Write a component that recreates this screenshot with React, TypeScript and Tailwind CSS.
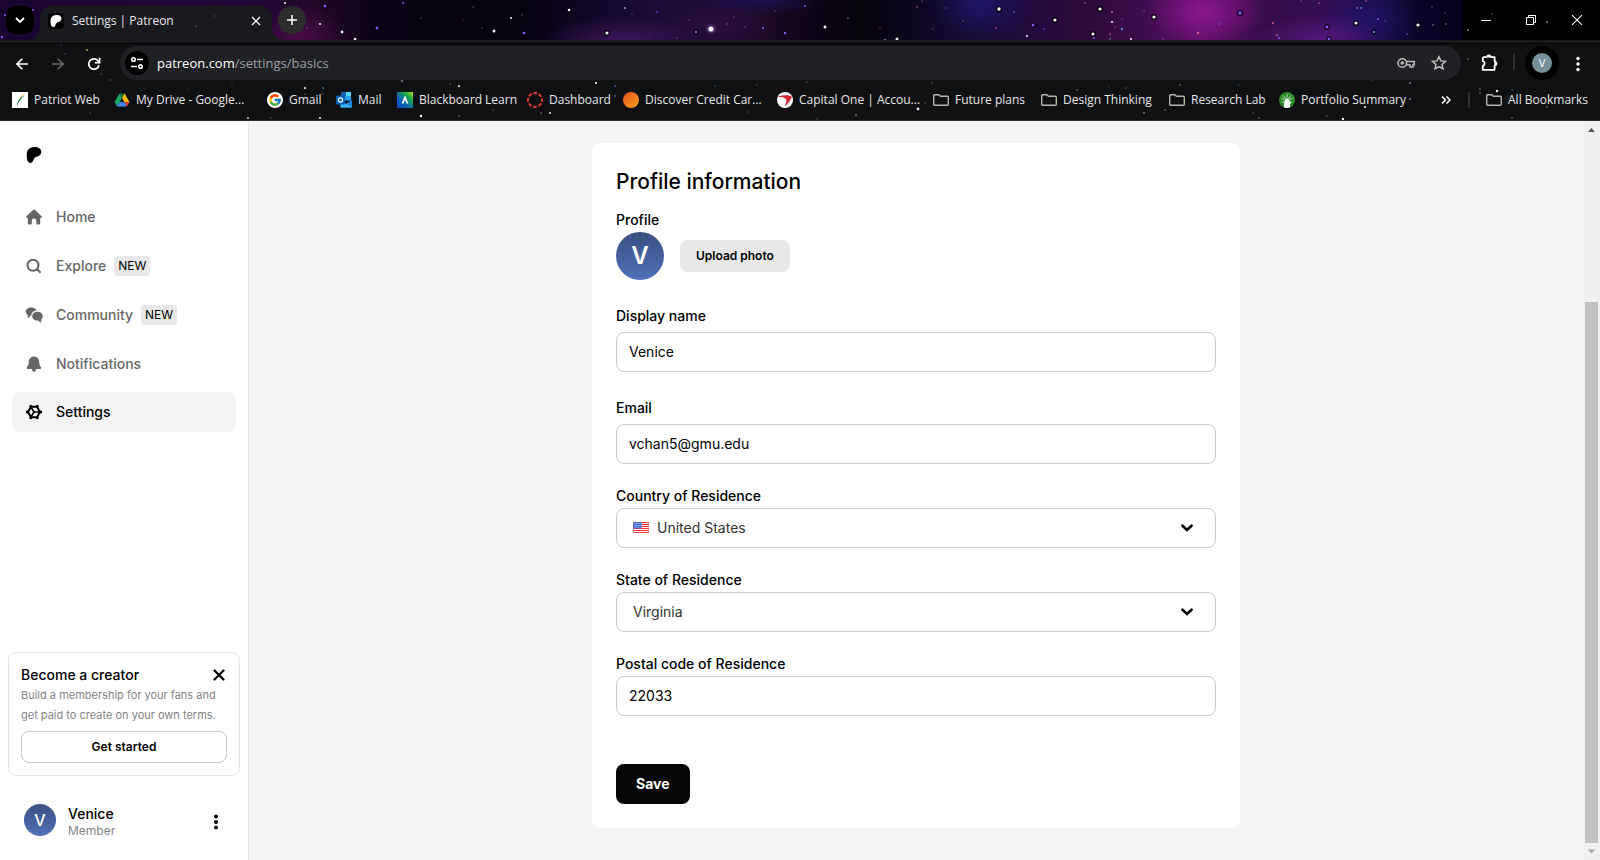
import React from "react";
import { FcGoogle } from "react-icons/fc";

const WHITE = "#ffffff";
const PURPLE = "#8f5cff";
const PINK = "#d9608f";
const BLUE = "#5a86d8";
const GREY = "#8a8799";

type Star = [number, number, number, string];

const SKY_STARS: Star[] = [
  [285, 3, 1, WHITE], [325, 6, 1.5, PURPLE], [320, 24, 1, WHITE], [342, 32, 1.4, WHITE], [355, 39, 1.3, WHITE],
  [377, 28, 1.4, PURPLE], [307, 28, 0.8, PINK], [5, 15, 1, PURPLE], [2, 37, 1.2, PURPLE], [33, 10, 1, PURPLE],
  [403, 3, 1, PURPLE], [473, 7, 0.8, GREY], [421, 18, 0.8, GREY], [511, 18, 1, WHITE], [494, 31, 1.5, WHITE],
  [522, 15, 0.8, GREY], [482, 28, 0.7, GREY], [463, 20, 0.6, PINK], [524, 33, 1.3, PURPLE], [607, 33, 1.6, WHITE],
  [569, 10, 1.3, WHITE], [625, 8, 0.9, WHITE], [657, 12, 0.9, PURPLE], [632, 14, 0.7, PURPLE], [711, 29, 2.6, WHITE],
  [785, 33, 1.2, PURPLE], [763, 28, 1, PURPLE], [689, 20, 0.7, GREY], [696, 32, 1.3, PURPLE], [677, 38, 0.7, GREY],
  [727, 24, 0.8, PINK], [734, 17, 0.7, PINK], [745, 27, 0.8, BLUE], [775, 11, 0.7, GREY], [650, 32, 0.6, GREY],
  [805, 6, 1, PURPLE], [825, 27, 1.5, WHITE], [848, 18, 0.9, GREY], [897, 39, 1.5, WHITE], [880, 28, 0.7, PINK],
  [917, 7, 0.9, PINK], [922, 1, 0.8, GREY], [933, 29, 0.7, GREY], [946, 8, 0.8, GREY], [963, 21, 0.8, GREY],
  [996, 28, 0.9, PINK], [999, 9, 1.7, WHITE], [1033, 25, 1.5, PURPLE], [1055, 20, 1.6, WHITE], [1027, 36, 1, WHITE],
  [1014, 12, 0.9, PURPLE], [1044, 29, 0.9, PURPLE], [1100, 9, 1.6, WHITE], [1112, 12, 1, PINK], [1112, 22, 1, WHITE],
  [1115, 27, 0.8, GREY], [1093, 34, 1.6, WHITE], [1094, 38, 1, PURPLE], [1122, 29, 1.2, BLUE], [1131, 39, 1, WHITE],
  [1122, 19, 0.8, PURPLE], [1110, 34, 0.9, PINK], [1110, 39, 0.9, GREY], [1144, 11, 0.8, PINK], [1154, 17, 1.6, WHITE],
  [1198, 33, 1.2, PINK], [1085, 3, 0.9, GREY], [1163, 39, 0.8, PURPLE], [1240, 13, 1.7, PURPLE], [1219, 24, 0.9, PURPLE],
  [1273, 23, 1, PINK], [1277, 35, 1, PINK], [1279, 38, 1, PURPLE], [1327, 27, 1.5, PURPLE], [1356, 23, 1.5, WHITE],
  [1374, 32, 1.3, BLUE], [1357, 8, 1, BLUE], [1361, 8, 1, BLUE], [1319, 3, 0.9, PINK], [1366, 1, 0.9, PINK],
  [1329, 39, 1.3, PURPLE], [1385, 21, 0.8, PURPLE], [1378, 19, 1, PURPLE], [1418, 25, 1.6, WHITE], [1407, 34, 0.9, BLUE],
  [1433, 25, 0.9, GREY], [1446, 24, 0.9, PINK], [1445, 13, 0.7, GREY], [1432, 7, 0.8, BLUE], [1301, 1, 0.8, GREY],
];

const TOOLBAR_STARS: Star[] = [
  [198, 42, 1.1, WHITE], [196, 26, 0.8, GREY], [215, 16, 0.7, GREY], [87, 50, 1.1, "#b3a06a"], [65, 54, 0.8, "#6b6fa8"],
  [101, 74, 0.8, GREY], [112, 80, 0.8, "#55555f"], [61, 45, 0.8, "#55555f"], [110, 80, 0.7, GREY], [140, 88, 0.7, "#55555f"],
  [188, 90, 0.8, "#55555f"], [305, 88, 1.1, WHITE], [323, 88, 1, "#44629b"], [305, 94, 0.8, GREY], [323, 94, 0.9, "#44629b"],
  [248, 118, 1.1, "#c8c08a"], [271, 118, 0.8, GREY], [320, 118, 1, WHITE], [232, 86, 0.8, "#55555f"], [90, 113, 0.7, GREY],
  [402, 81, 1, GREY], [450, 84, 0.8, GREY], [459, 86, 1, WHITE], [596, 83, 1.1, WHITE], [615, 86, 1, "#44629b"],
  [615, 96, 1, "#44629b"], [421, 116, 1.2, WHITE], [459, 116, 0.9, GREY], [493, 110, 0.8, GREY], [541, 113, 0.9, GREY],
  [550, 113, 1, WHITE], [715, 86, 0.8, "#44629b"], [748, 112, 0.7, GREY], [757, 85, 0.7, GREY], [807, 82, 0.8, GREY],
  [918, 109, 1.4, WHITE], [925, 103, 0.8, GREY], [856, 115, 1, "#8a7f50"], [817, 119, 0.8, GREY], [932, 83, 0.8, GREY],
  [1077, 90, 0.9, GREY], [1109, 87, 0.8, "#8a3535"], [1126, 88, 0.8, GREY], [1144, 113, 1, "#8a7f50"], [1165, 110, 0.9, GREY],
  [1180, 85, 0.9, GREY], [1410, 83, 1, GREY], [1410, 99, 1, GREY], [1497, 91, 1.2, WHITE], [1480, 89, 0.9, GREY],
  [1480, 93, 0.9, GREY], [1343, 119, 1.2, WHITE], [1365, 107, 1.1, WHITE], [1327, 116, 0.8, GREY], [1253, 113, 0.8, GREY],
  [1259, 118, 0.9, GREY], [1239, 85, 0.8, "#44629b"], [1372, 80, 0.8, GREY], [1468, 59, 0.9, GREY], [1453, 41, 0.8, WHITE],
  [1538, 42, 1.1, WHITE], [1329, 42, 0.8, GREY], [1512, 118, 0.9, GREY], [1512, 90, 0.8, GREY], [1547, 107, 0.9, GREY],
  [1547, 22, 1, GREY], [1468, 30, 1, GREY], [1492, 14, 0.8, GREY], [865, 42, 0.8, "#8a7f50"], [885, 40, 0.9, WHITE],
  [464, 42, 0.8, GREY], [1117, 41, 0.8, GREY],
];

function Stars({ stars }: { stars: Star[] }) {
  return (
    <svg className="pointer-events-none absolute left-0 top-0" width="1600" height="120" aria-hidden="true">
      {stars.map(([x, y, r, fill], i) => (
        <g key={i}>
          {r >= 1.3 && r < 2 && <circle cx={x} cy={y} r={r + 1.5} fill="#0a0212" opacity="0.75" />}
          {r > 2 && <circle cx={x} cy={y} r="5" fill="#8a5aa8" opacity="0.3" />}
          <circle cx={x} cy={y} r={r} fill={fill} opacity={r < 1 ? 0.65 : 0.95} />
        </g>
      ))}
    </svg>
  );
}

function PatreonMark({ className }: { className?: string }) {
  return (
    <svg viewBox="0 0 24 24" fill="currentColor" className={className} aria-hidden="true">
      <path d="M22.957 7.21c-.004-3.064-2.391-5.576-5.191-6.482-3.478-1.125-8.064-.962-11.384.604C2.357 3.231 1.093 7.391 1.046 11.54c-.039 3.411.302 12.396 5.369 12.46 3.765.047 4.326-4.804 6.068-7.141 1.24-1.662 2.836-2.132 4.801-2.618 3.376-.836 5.678-3.501 5.673-7.031Z" />
    </svg>
  );
}

function FolderIcon() {
  return (
    <svg viewBox="0 0 16 16" className="size-4 shrink-0" fill="none" stroke="#b4b4b4" strokeWidth="1.4" aria-hidden="true">
      <path d="M1.7 2.7h4.1l1.6 1.6h6.9c.6 0 1 .4 1 1v7c0 .6-.4 1-1 1H1.700c-.6 0-1-.4-1-1v-8.600c0-.6.4-1 1-1z" />
    </svg>
  );
}

const patriotIcon = (
  <svg viewBox="0 0 16 16" className="size-4 shrink-0" aria-hidden="true">
    <path d="M0 0h16v16H0z" fill="#fff" />
    <path d="M5 14.500C5 9 8 5 12.500 3.500 9 6.500 6.500 9.500 5 14.500z" fill="#1d6b42" />
    <path d="M6.500 7C8.500 4 11 2.500 13.500 2 11 3.500 9 5 6.500 7z" fill="#f2b632" />
  </svg>
);

const driveIcon = (
  <svg viewBox="0 0 16 16" className="size-4 shrink-0" aria-hidden="true">
    <path d="M5.400 1.500 8 6 3.200 14.500 .5 10z" fill="#1ea362" />
    <path d="M5.400 1.500h5.200L8 6z" fill="#11753f" />
    <path d="M10.600 1.500 15.500 10h-5.200L8 6z" fill="#fbbc04" />
    <path d="M15.500 10 12.800 14.500 10.300 10z" fill="#ea4335" />
    <path d="M5.700 10h4.600l2.500 4.500H3.200z" fill="#4285f4" />
  </svg>
);

const googleIcon = (
  <span className="flex size-4 shrink-0 items-center justify-center rounded-full bg-white">
    <FcGoogle className="size-3.5" aria-hidden="true" />
  </span>
);

const outlookIcon = (
  <svg viewBox="0 0 16 16" className="size-4 shrink-0" aria-hidden="true">
    <path d="M5 0h10v9H5z" fill="#0f64b5" />
    <path d="M10 0h5v4h-5z" fill="#50d9ff" />
    <path d="M5 4h5v4H5z" fill="#1490df" />
    <path d="M10 4h5v4h-5z" fill="#28a8ea" />
    <path d="M4 15.500 16 8v7a.5.5 0 0 1-.5.500z" fill="#1a86dc" />
    <path d="M4 8l12 7.500H4.500z" fill="#35b8f1" />
    <rect y="3.500" width="9" height="9" rx=".8" fill="#0a5fb4" />
    <circle cx="4.500" cy="8" r="2.100" fill="none" stroke="#fff" strokeWidth="1.300" />
  </svg>
);

const blackboardIcon = (
  <svg viewBox="0 0 16 16" className="size-4 shrink-0" aria-hidden="true">
    <defs>
      <linearGradient id="bb" x1="1" y1="0" x2="0" y2="1">
        <stop offset="0" stopColor="#b5dc12" />
        <stop offset="0.300" stopColor="#12a648" />
        <stop offset="0.600" stopColor="#0a68b4" />
        <stop offset="1" stopColor="#0b44c4" />
      </linearGradient>
    </defs>
    <path d="M0 0h16v16H0z" fill="url(#bb)" />
    <path d="M5.500 11.500 8 5.500l2.500 6" fill="none" stroke="#fff" strokeWidth="1.800" />
  </svg>
);

const canvasIcon = (
  <svg viewBox="0 0 16 16" className="size-4 shrink-0" fill="none" aria-hidden="true">
    <circle cx="8" cy="8" r="7" stroke="#e23b2e" strokeWidth="2" strokeDasharray="3.700 1.798" strokeDashoffset="1.850" />
  </svg>
);

const discoverIcon = (
  <span className="size-4 shrink-0 rounded-full bg-linear-to-br from-[#e4501b] to-[#fb9f1d]" />
);

const capitalIcon = (
  <svg viewBox="0 0 16 16" className="size-4 shrink-0" aria-hidden="true">
    <circle cx="8" cy="8" r="8" fill="#fff" />
    <path d="M.8 4.800C5 3 10.500 2.600 15 4.800c-1 3.200-4 7.200-7.200 9.400 1.200-3.400 2-5.200 1.200-6.800C7.800 5.400 4.500 4.800.8 4.800z" fill="#d22630" />
  </svg>
);

const portfolioIcon = (
  <svg viewBox="0 0 16 16" className="size-4 shrink-0" aria-hidden="true">
    <circle cx="8" cy="8" r="8" fill="#2f8a2b" />
    <path d="M8 8V2M8 8 4 3.500M8 8l4-4.500M8 8 2.500 6.500M8 8l5.500-1.500M8 8l-5 2.500M8 8l5 2.500" stroke="#cfe8c8" strokeWidth=".8" />
    <path d="M4.800 15.300c.2-4 .4-7.300 3.600-8.500 1.600 1 3.400 3 3.200 4.800l-1 .4c.6 1.200.7 2.300.5 3.300-2 .9-4.300.9-6.300 0z" fill="#fff" />
  </svg>
);

const BOOKMARKS: { label: string; icon: React.ReactNode; width: string }[] = [
  { label: "Patriot Web", icon: patriotIcon, width: "w-[102px]" },
  { label: "My Drive - Google...", icon: driveIcon, width: "w-[153px]" },
  { label: "Gmail", icon: googleIcon, width: "w-[69px]" },
  { label: "Mail", icon: outlookIcon, width: "w-[61px]" },
  { label: "Blackboard Learn", icon: blackboardIcon, width: "w-[130px]" },
  { label: "Dashboard", icon: canvasIcon, width: "w-24" },
  { label: "Discover Credit Car...", icon: discoverIcon, width: "w-[154px]" },
  { label: "Capital One | Accou...", icon: capitalIcon, width: "w-[156px]" },
  { label: "Future plans", icon: <FolderIcon />, width: "w-[108px]" },
  { label: "Design Thinking", icon: <FolderIcon />, width: "w-32" },
  { label: "Research Lab", icon: <FolderIcon />, width: "w-[110px]" },
  { label: "Portfolio Summary", icon: portfolioIcon, width: "w-[140px]" },
];

function TabStrip() {
  return (
    <div className="relative flex h-10 items-end overflow-hidden bg-[#07020f]">
      <div className="absolute inset-0 bg-[linear-gradient(90deg,#1a0530_0px,#220635_250px,#220828_310px,#0d0318_370px,#06020f_420px,#06020f_520px,#120728_600px,#1c0b38_660px,#1a0a34_720px,#1a0822_770px,#0c0414_820px,#05020a_860px,#0e0722_920px,#180c3a_980px,#220a3e_1030px,#2c0a3a_1090px,#400d50_1150px,#64126c_1200px,#330c46_1270px,#330f56_1330px,#1c0d48_1370px,#0a0528_1420px,#04021a_1460px,#000_1480px)]" />
      <div className="absolute inset-0 bg-[radial-gradient(50px_30px_at_300px_36px,rgba(90,14,80,0.7),transparent),radial-gradient(80px_26px_at_620px_42px,rgba(86,30,120,0.6),transparent),radial-gradient(60px_24px_at_720px_24px,rgba(60,20,70,0.5),transparent),radial-gradient(50px_30px_at_980px_6px,rgba(32,24,120,0.7),transparent),radial-gradient(60px_30px_at_1205px_12px,rgba(160,24,160,0.65),transparent),radial-gradient(70px_24px_at_1320px_40px,rgba(110,30,150,0.6),transparent),radial-gradient(50px_30px_at_1370px_20px,rgba(40,24,130,0.5),transparent),radial-gradient(60px_16px_at_760px_0px,rgba(30,20,110,0.6),transparent)]" />
      <Stars stars={SKY_STARS} />
      <button aria-label="Search tabs" className="relative mb-1.5 ml-1.5 flex size-7 items-center justify-center rounded-[10px] bg-black">
        <svg viewBox="0 0 10 10" className="size-2.5" fill="none" stroke="#fff" strokeWidth="1.800" aria-hidden="true">
          <path d="m1 3 4 4 4-4" />
        </svg>
      </button>
      <div className="relative ml-1.5 flex h-[34px] w-[232px] items-center rounded-t-xl bg-[#181a1d] pb-1 pl-2 pr-2 text-white">
        <span className="absolute bottom-0 right-full size-2.5 bg-[radial-gradient(circle_at_0_0,transparent_9px,#181a1d_10px)]" />
        <span className="absolute bottom-0 left-full size-2.5 bg-[radial-gradient(circle_at_100%_0,transparent_9px,#181a1d_10px)]" />
        <span className="flex size-4 items-center justify-center rounded-sm bg-black">
          <PatreonMark className="size-3" />
        </span>
        <span className="ml-2 flex-1 truncate text-xs text-[#e8e8e8]">Settings | Patreon</span>
        <button aria-label="Close tab" className="flex size-4 items-center justify-center">
          <svg viewBox="0 0 10 10" className="size-2.5" stroke="#e8e8e8" strokeWidth="1.500" aria-hidden="true">
            <path d="m1 1 8 8M9 1 1 9" />
          </svg>
        </button>
      </div>
      <button aria-label="New tab" className="relative mb-1.5 ml-1.5 flex size-7 items-center justify-center rounded-full bg-[#2c2c2c]">
        <svg viewBox="0 0 10 10" className="size-2.5" stroke="#fff" strokeWidth="1.500" aria-hidden="true">
          <path d="M5 0v10M0 5h10" />
        </svg>
      </button>
      <div className="relative ml-auto flex h-10 bg-black">
        <button aria-label="Minimize" className="flex h-10 w-[45px] items-center justify-center">
          <svg viewBox="0 0 10 10" className="size-2.5" stroke="#fff" aria-hidden="true"><path d="M0 5.500h10" /></svg>
        </button>
        <button aria-label="Restore" className="flex h-10 w-[46px] items-center justify-center">
          <svg viewBox="0 0 10 10" className="size-2.5" fill="none" stroke="#fff" aria-hidden="true">
            <path d="M.5 2.500h7v7h-7zM2.500 2.500v-2h7v7h-2" />
          </svg>
        </button>
        <button aria-label="Close" className="flex h-10 w-[46px] items-center justify-center">
          <svg viewBox="0 0 10 10" className="size-2.5" stroke="#fff" strokeWidth="1.100" aria-hidden="true"><path d="m0 0 10 10M10 0 0 10" /></svg>
        </button>
      </div>
    </div>
  );
}

function Toolbar() {
  return (
    <div className="relative flex h-10 items-end border-t-[3px] border-[#181a1d] text-white">
      <div className="absolute inset-x-0 top-0 h-px bg-black" />
      <button aria-label="Back" className="mb-2 ml-3.5 flex size-4 items-center justify-center">
        <svg viewBox="0 0 12 12" className="size-3" fill="none" stroke="#fff" strokeWidth="1.600" aria-hidden="true"><path d="M12 6H1.200M6.300.8 1 6l5.300 5.200" /></svg>
      </button>
      <button aria-label="Forward" className="mb-2 ml-5 flex size-4 items-center justify-center">
        <svg viewBox="0 0 12 12" className="size-3" fill="none" stroke="#66686b" strokeWidth="1.600" aria-hidden="true"><path d="M0 6h10.800M5.700.8 11 6l-5.300 5.200" /></svg>
      </button>
      <button aria-label="Reload" className="mb-2 ml-5 flex size-4 items-center justify-center">
        <svg viewBox="0 0 14 14" className="size-3.5" fill="none" stroke="#fff" strokeWidth="1.700" aria-hidden="true">
          <path d="M12 8.200A5.200 5.200 0 1 1 10.800 3.500L12.300 5" />
          <path d="M12.600.8v4.800H7.800" />
        </svg>
      </button>
      <div className="ml-[18px] flex h-[34px] flex-1 items-center rounded-full bg-[#202124] pl-[5px] pr-3.5">
        <span className="flex size-6 shrink-0 items-center justify-center rounded-full bg-black">
          <svg viewBox="0 0 14 14" className="size-3.5" fill="none" stroke="#fff" strokeWidth="1.500" aria-hidden="true">
            <circle cx="3.500" cy="3.500" r="1.800" /><path d="M7 3.500h6" />
            <circle cx="10.500" cy="10.500" r="1.800" /><path d="M1 10.500h6" />
          </svg>
        </span>
        <a href="#" className="ml-2 flex-1 pt-0.5 text-[13px] text-[#9aa0a6]"><span className="text-white">patreon.com</span>/settings/basics</a>
        <svg viewBox="0 0 18 12" className="h-3 w-[18px]" fill="none" stroke="#b8b8b8" strokeWidth="1.600" aria-hidden="true">
          <circle cx="5.300" cy="6" r="4.300" /><circle cx="5.300" cy="6" r="1" fill="#b8b8b8" />
          <path d="M9.300 4.500h7.900v3.300h-1.200v2.200h-3V7.800H9.300" />
        </svg>
        <svg viewBox="0 0 16 16" className="ml-4 size-4" fill="none" stroke="#c4c4c4" strokeWidth="1.400" aria-hidden="true">
          <path d="m8 1.700 1.900 4.200 4.500.5-3.400 3 1 4.500L8 11.600l-4 2.300 1-4.500-3.400-3 4.500-.500z" />
        </svg>
      </div>
      <button aria-label="Extensions" className="mb-2 ml-5 flex size-[18px] items-center justify-center">
        <svg viewBox="0 0 18 18" className="size-[18px]" fill="none" stroke="#fff" strokeWidth="1.800" aria-hidden="true">
          <path d="M1.800 3.200h4M9.600 3.200h4v4.500M13.600 11.300v4.500H1.800v-4c2.400-.6 2.400-4 0-4.600v-4" strokeLinejoin="round" />
          <path d="M5.300 3.200h5a2.400 2.400 0 0 0-5 0zM13.600 7v5a2.500 2.500 0 0 0 0-5z" fill="#fff" strokeWidth=".6" />
        </svg>
      </button>
      <span className="mb-2.5 ml-3.5 h-4 w-0.5 bg-[#2e3033]" />
      <button aria-label="Profile menu" className="ml-2.5 flex size-[34px] items-center justify-center rounded-full bg-black">
        <span className="flex size-5 items-center justify-center rounded-full bg-[#78909c] text-[11px]">V</span>
      </button>
      <button aria-label="Browser menu" className="mb-2 ml-[11px] mr-3.5 flex size-4 items-center justify-center">
        <svg viewBox="0 0 4 16" className="h-4" fill="#fff" aria-hidden="true"><circle cx="2" cy="2.500" r="1.700" /><circle cx="2" cy="8" r="1.700" /><circle cx="2" cy="13.500" r="1.700" /></svg>
      </button>
    </div>
  );
}

function BookmarksBar() {
  return (
    <nav aria-label="Bookmarks" className="relative flex h-[41px] items-center border-b border-[#2c2c30] pl-3 text-xs text-[#e8e8e8]">
      {BOOKMARKS.map((b) => (
        <a key={b.label} href="#" className={`flex shrink-0 items-center gap-1.5 whitespace-nowrap ${b.width}`}>
          {b.icon}
          {b.label}
        </a>
      ))}
      <button aria-label="More bookmarks" className="ml-auto flex size-4 items-center justify-center">
        <svg viewBox="0 0 10 8" className="h-2 w-2.5" fill="none" stroke="#fff" strokeWidth="1.500" aria-hidden="true"><path d="m1 .5 3.500 3.500L1 7.500M5.500.5 9 4 5.500 7.500" /></svg>
      </button>
      <span className="ml-3.5 h-4 w-0.5 bg-[#2e3033]" />
      <a href="#" className="ml-4 mr-3 flex items-center gap-1.5 whitespace-nowrap">
        <FolderIcon />
        All Bookmarks
      </a>
    </nav>
  );
}

const NAV = [
  {
    label: "Home",
    height: "h-10",
    icon: <path d="M7 1a1.400 1.400 0 0 1 2 0l6.500 6.300c.7.800.3 1.700-.7 1.700h-.6v5.200c0 .800-.6 1.400-1.400 1.400h-1.300c-.7 0-1.200-.5-1.200-1.200v-2.600a2.200 2.200 0 0 0-4.500 0v2.600c0 .7-.5 1.200-1.200 1.200H3.200c-.8 0-1.400-.6-1.400-1.400V9h-.6C.2 9-.2 8.100.5 7.300z" />,
  },
  {
    label: "Explore",
    height: "h-[41px]",
    badge: true,
    icon: <path d="M7 1.700a5.500 5.500 0 1 1 0 11A5.500 5.500 0 0 1 7 1.700zm3.800 9.300 3.800 3.800" fill="none" stroke="currentColor" strokeWidth="2" />,
  },
  {
    label: "Community",
    height: "h-[41px]",
    badge: true,
    icon: (
      <>
        <path d="M5.300.6C8 .6 9.800 1.900 10.200 3.600 7.300 4 5.300 6 5.200 8.500c-.7.300-1.500.6-2 1.700-.6 1-1.700.5-1.600-.4l.1-2C.5 7.200-.3 6-.3 4.600-.3 2.300 2.200.6 5.300.6z" />
        <path d="M11.500 4.800c3 0 5.200 1.900 5.200 4.400 0 1.500-.6 2.700-1.500 3.500l.1 1.900c0 .9-.9 1.200-1.500.5l-1.100-1.400c-3.700.3-6.500-1.700-6.500-4.400 0-2.600 2.300-4.500 5.300-4.500z" />
      </>
    ),
  },
  {
    label: "Notifications",
    height: "h-[41px]",
    icon: <path d="M8 .5c3 0 5.200 2.300 5.200 5.300 0 2.500.6 3.900 1.700 5.200.8 1 .4 1.900-.8 1.900H9.900v1.200c0 1-.8 1.700-1.900 1.700s-1.900-.7-1.900-1.700v-1.200H1.900c-1.200 0-1.600-.9-.8-1.900 1.100-1.300 1.700-2.700 1.700-5.200C2.800 2.800 5 .5 8 .5z" />,
  },
  {
    label: "Settings",
    height: "h-10",
    active: true,
    icon: (
      <g fill="none" stroke="currentColor">
        <path d="M10.900 2.800H5.100L2 8l3.100 5.200h5.800L14 8z" strokeWidth="2" strokeLinejoin="round" />
        <path d="M11.200 2.200v.6M4.800 2.200v.6M1.300 8h.6M14.100 8h.6M4.800 13.200v.6M11.200 13.200v.6" strokeWidth="3" strokeLinecap="round" />
        <path d="M8 8 5.300 3.500M8 8h6M8 8l-2.700 4.500" strokeWidth="1.500" />
      </g>
    ),
  },
];

function Sidebar() {
  return (
    <aside className="flex w-[249px] shrink-0 flex-col border-r border-[#e5e5e5] bg-white">
      <a href="#" aria-label="Patreon home" className="ml-[26px] mt-[26px] size-4 text-black">
        <PatreonMark className="size-4" />
      </a>
      <nav aria-label="Main" className="mx-3 mt-[34px] flex flex-col gap-2">
        {NAV.map((n) => (
          <a
            key={n.label}
            href="#"
            className={`flex items-center rounded-lg pl-3.5 text-sm font-medium ${n.height} ${n.active ? "bg-[#f4f4f4] text-black" : "text-[#666]"}`}
          >
            <svg viewBox="0 0 16 16" className="size-4 overflow-visible" fill="currentColor" aria-hidden="true">{n.icon}</svg>
            <span className="ml-3.5">{n.label}</span>
            {n.badge && <span className="ml-2 rounded bg-[#e8e8e8] px-1 text-xs leading-5 font-normal text-black">NEW</span>}
          </a>
        ))}
      </nav>
      <section className="mx-2 mt-auto rounded-lg border border-[#e5e5e5] p-3">
        <div className="flex h-5 items-center justify-between">
          <h2 className="text-sm font-medium text-black">Become a creator</h2>
          <button aria-label="Dismiss" className="mr-0.5 flex size-3 items-center justify-center">
            <svg viewBox="0 0 12 12" className="size-3" stroke="#000" strokeWidth="2.200" strokeLinecap="round" aria-hidden="true"><path d="m1.500 1.500 9 9M10.500 1.500l-9 9" /></svg>
          </button>
        </div>
        <p className="text-[11px] leading-5 text-[#858585]">
          Build a membership for your fans and get paid to create on your own terms.
        </p>
        <button className="mt-1.5 h-8 w-full rounded-lg border border-[#c9c9c9] text-xs font-semibold text-black">Get started</button>
      </section>
      <div className="mb-6 ml-6 mr-6 mt-7 flex h-8 items-center">
        <span className="flex size-8 items-center justify-center rounded-full bg-linear-to-b from-[#3a5081] to-[#5070bb] text-base font-medium text-white">V</span>
        <div className="ml-3 flex-1 pt-1">
          <p className="text-sm leading-[18px] font-medium text-black">Venice</p>
          <p className="text-xs leading-4 text-[#858585]">Member</p>
        </div>
        <button aria-label="Account menu" className="flex h-5 w-4 items-end justify-center">
          <svg viewBox="0 0 4 16" className="h-4" fill="#000" aria-hidden="true"><circle cx="2" cy="2.500" r="2" /><circle cx="2" cy="8" r="2" /><circle cx="2" cy="13.500" r="2" /></svg>
        </button>
      </div>
    </aside>
  );
}

function Chevron() {
  return (
    <svg viewBox="0 0 12 8" className="pointer-events-none absolute right-[23px] top-4 h-2 w-3" fill="none" stroke="#000" strokeWidth="2.600" strokeLinecap="round" aria-hidden="true">
      <path d="m1.500 1.700 4.500 4.300 4.500-4.300" />
    </svg>
  );
}

function Flag() {
  return (
    <svg viewBox="0 0 16 11" className="pointer-events-none absolute left-[17px] top-3.5 h-[11px] w-4" aria-hidden="true">
      <path d="M0 0h16v11H0z" fill="#fff" />
      <path d="M0 .5h16M0 2.500h16M0 4.500h16M0 6.500h16M0 8.500h16M0 10.500h16" stroke="#ff3030" strokeWidth="1" />
      <path d="M0 0h9v6.500H0z" fill="#2f62e0" />
      <path d="M1.500 1.500h7M1.500 3.300h7M1.500 5.100h7" stroke="#fff" strokeWidth=".9" strokeDasharray="1 1" />
      <path d="M.25.25h15.500v10.500H.25z" fill="none" stroke="#b05a70" strokeWidth=".5" />
    </svg>
  );
}

const LABEL = "block text-sm leading-6 font-medium text-black";
const FIELD = "block h-10 w-full rounded-lg border border-[#c9c9c9] bg-white text-sm";

function ProfileForm() {
  return (
    <form className="mx-auto mt-[22px] w-full max-w-[648px] rounded-lg bg-white p-6" onSubmit={(e) => e.preventDefault()}>
      <h1 className="text-[21px] leading-[29px] font-medium text-black">Profile information</h1>
      <p className={`mt-3 ${LABEL}`}>Profile</p>
      <div className="flex items-center gap-4">
        <span className="flex size-12 items-center justify-center rounded-full bg-linear-to-b from-[#3a5081] to-[#5070bb] text-2xl font-semibold text-white">V</span>
        <button type="button" className="h-8 rounded-lg bg-[#e8e8e8] px-4 text-xs font-semibold text-black">Upload photo</button>
      </div>
      <div className="mt-6">
        <label htmlFor="name" className={LABEL}>Display name</label>
        <input id="name" defaultValue="Venice" className={`mt-1 px-3 pb-0.5 text-black ${FIELD}`} />
      </div>
      <div className="mt-6">
        <label htmlFor="email" className={LABEL}>Email</label>
        <input id="email" type="email" defaultValue="vchan5@gmu.edu" className={`mt-1 px-3 pb-0.5 text-black ${FIELD}`} />
      </div>
      <div className="mt-5">
        <label htmlFor="country" className={LABEL}>Country of Residence</label>
        <div className="relative">
          <select id="country" defaultValue="us" className={`appearance-none pl-10 text-[#333] ${FIELD}`}>
            <option value="us">United States</option>
          </select>
          <Flag />
          <Chevron />
        </div>
      </div>
      <div className="mt-5">
        <label htmlFor="state" className={LABEL}>State of Residence</label>
        <div className="relative">
          <select id="state" defaultValue="va" className={`appearance-none pl-4 text-[#333] ${FIELD}`}>
            <option value="va">Virginia</option>
          </select>
          <Chevron />
        </div>
      </div>
      <div className="mt-5">
        <label htmlFor="postal" className={LABEL}>Postal code of Residence</label>
        <input id="postal" defaultValue="22033" className={`px-3 pb-0.5 text-black ${FIELD}`} />
      </div>
      <button type="submit" className="mt-12 h-10 rounded-lg bg-[#060606] px-5 text-sm font-bold text-white">Save</button>
    </form>
  );
}

function ScrollBar() {
  return (
    <div aria-hidden="true" className="flex w-[17px] shrink-0 flex-col items-center bg-[#f0f0f0]">
      <svg viewBox="0 0 17 17" className="size-[17px]" fill="#505050"><path d="M5 11h7L8.500 7z" /></svg>
      <div className="flex-[164]" />
      <div className="w-[13px] flex-[541] bg-[#c1c1c1]" />
      <svg viewBox="0 0 17 17" className="size-[17px]" fill="#a3a3a3"><path d="M5 6.500h7l-3.500 4z" /></svg>
    </div>
  );
}

export default function App() {
  return (
    <div className="flex h-screen flex-col font-['Inter',sans-serif]">
      <header className="relative overflow-hidden bg-[#0e1012] font-['Open_Sans',sans-serif]">
        <TabStrip />
        <Stars stars={TOOLBAR_STARS} />
        <Toolbar />
        <BookmarksBar />
      </header>
      <div className="flex min-h-0 flex-1">
        <Sidebar />
        <main className="min-w-0 flex-1 overflow-hidden bg-[#f4f4f4]">
          <ProfileForm />
        </main>
        <ScrollBar />
      </div>
    </div>
  );
}
